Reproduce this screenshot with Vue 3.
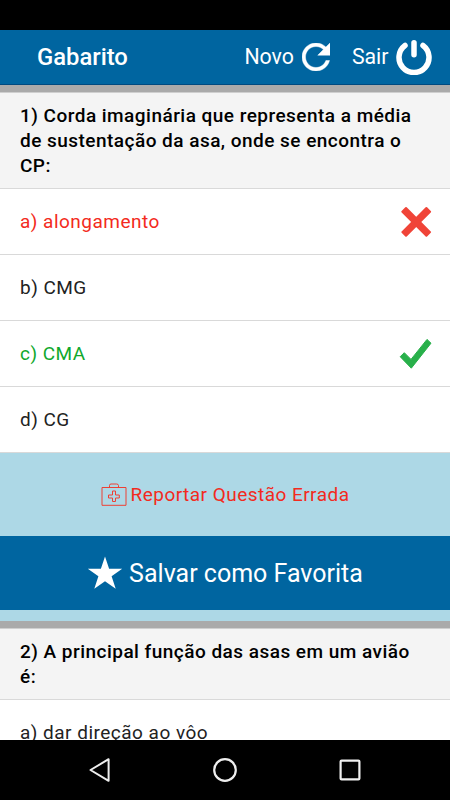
<script setup>
const questions = [
  {
    title: '1) Corda imaginária que representa a média de sustentação da asa, onde se encontra o CP:',
    options: [
      { text: 'a) alongamento', state: 'wrong' },
      { text: 'b) CMG', state: '' },
      { text: 'c) CMA', state: 'right' },
      { text: 'd) CG', state: '' },
    ],
    actions: true,
  },
  {
    title: '2) A principal função das asas em um avião é:',
    options: [{ text: 'a) dar direção ao vôo', state: '' }],
    actions: false,
  },
]
</script>

<template>
  <div class="screen">
    <div class="status"></div>
    <header class="bar">
      <h1>Gabarito</h1>
      <button class="tool novo">
        <span>Novo</span>
        <svg width="28" height="28" viewBox="4 4 16 16">
          <path d="M17.65 6.35C16.2 4.9 14.21 4 12 4c-4.42 0-7.99 3.58-7.99 8s3.57 8 7.99 8c3.73 0 6.84-2.55 7.73-6h-2.08c-.82 2.33-3.04 4-5.65 4-3.31 0-6-2.69-6-6s2.69-6 6-6c1.66 0 3.14.69 4.22 1.78L13 11h7V4l-2.35 2.35z" fill="#fff" stroke="#fff" stroke-width=".25" />
        </svg>
      </button>
      <button class="tool sair">
        <span>Sair</span>
        <svg width="36" height="36" viewBox="0 0 36 36">
          <path d="M9 6.5A15 15 0 1 0 27 6.5" fill="none" stroke="#fff" stroke-width="5.5" stroke-linecap="round" />
          <path d="M18 3.8V15.7" stroke="#fff" stroke-width="5.5" stroke-linecap="round" />
        </svg>
      </button>
    </header>
    <main>
      <section v-for="q in questions" :key="q.title" class="question">
        <h2>{{ q.title }}</h2>
        <div v-for="o in q.options" :key="o.text" class="option" :class="o.state">
          <span>{{ o.text }}</span>
          <svg v-if="o.state === 'wrong'" width="32" height="32" viewBox="0 0 32 32">
            <g fill="#f04438" transform="translate(15.2 15.9) rotate(45)">
              <rect x="-18" y="-3.6" width="36" height="7.2" rx="1" />
              <rect x="-3.6" y="-18" width="7.2" height="36" rx="1" />
            </g>
          </svg>
          <svg v-if="o.state === 'right'" width="34" height="32" viewBox="0 0 34 32">
            <path d="M1.2 18.7L5.3 14.7L12 21.4L28 1.4L32 5.2L12.3 30.2Z" fill="#28b04a" stroke="#28b04a" stroke-width="1" stroke-linejoin="round" />
          </svg>
        </div>
        <template v-if="q.actions">
          <div class="report">
            <svg width="26" height="24" viewBox="0 0 26 24">
              <g fill="none" stroke="#ee4034" stroke-width="1">
                <path d="M1 4.5H25V22.3H1ZM8.5 4.5V2.5Q8.5 1 10 1H15.5Q17.5 1 17.5 2.5V4.5" />
                <path d="M11.5 8H14.5V12H18.3V15H14.5V18.5H11.5V15H7.5V12H11.5Z" />
              </g>
            </svg>
            <span>Reportar Questão Errada</span>
          </div>
          <div class="favorite">
            <svg width="36" height="34" viewBox="0 0 36 34">
              <path d="M18 .6L22.1 12.7H35.2L24.6 20.3L28.7 32.8L18 25.2L7.3 32.8L11.4 20.3L.8 12.7H13.9Z" fill="#fff" />
            </svg>
            <span>Salvar como Favorita</span>
          </div>
        </template>
      </section>
    </main>
    <nav class="system">
      <svg width="24" height="26" viewBox="0 0 24 26">
        <path d="M20.6 2.2V23.8L2.5 13Z" fill="none" stroke="#eee" stroke-width="2" stroke-linejoin="round" />
      </svg>
      <svg width="26" height="26" viewBox="0 0 26 26">
        <circle cx="13" cy="13" r="10.8" fill="none" stroke="#eee" stroke-width="2.2" />
      </svg>
      <svg width="24" height="24" viewBox="0 0 24 24">
        <rect x="2.6" y="2.6" width="18.8" height="18.8" rx="1" fill="none" stroke="#eee" stroke-width="2.2" />
      </svg>
    </nav>
  </div>
</template>

<style>
body {
  margin: 0;
  background: #000;
}
</style>

<style scoped>
.screen {
  width: 450px;
  height: 800px;
  display: flex;
  flex-direction: column;
  overflow: hidden;
  background: #fff;
  font-family: Roboto, "Liberation Sans", sans-serif;
  color: #000;
}
svg {
  display: block;
  flex: none;
}
.status {
  flex: none;
  height: 30px;
  background: #000;
}
.bar {
  flex: none;
  box-sizing: border-box;
  height: 55px;
  display: flex;
  align-items: center;
  padding: 0 18px 0 37px;
  background: #0065a0;
  border-bottom: 1px solid #004a80;
  color: #fff;
}
h1 {
  margin: 0 auto 0 0;
  font-size: 23.8px;
  line-height: 28px;
  font-weight: 500;
}
.tool {
  display: flex;
  align-items: center;
  padding: 0;
  border: 0;
  background: none;
  color: #fff;
  font-family: inherit;
  font-size: 21.3px;
  line-height: 28px;
}
.novo {
  gap: 8px;
  margin-right: 22px;
}
.sair {
  gap: 7.5px;
}
main {
  flex: 1;
  min-height: 0;
  overflow: hidden;
}
.question {
  border-top: 7px solid #aaa;
}
h2 {
  margin: 0;
  padding: 10px 20px 10px;
  border-top: 1px solid #cfcfcf;
  border-bottom: 1px solid #d9d9d9;
  background: #f4f4f4;
  font-size: 19px;
  line-height: 25px;
  font-weight: 500;
  letter-spacing: 0.47px;
}
.option {
  box-sizing: border-box;
  height: 66px;
  padding: 0 17px 0 20px;
  display: flex;
  align-items: center;
  justify-content: space-between;
  border-bottom: 1px solid #d9d9d9;
  font-size: 19px;
  letter-spacing: 0.48px;
  color: #222;
}
.option.wrong {
  color: #f32a20;
}
.option.right {
  color: #10a82c;
}
.report {
  height: 83px;
  display: flex;
  align-items: center;
  justify-content: center;
  gap: 4px;
  background: #add8e6;
  color: #f32a20;
  font-size: 19px;
  letter-spacing: 0.47px;
}
.favorite {
  height: 74px;
  display: flex;
  align-items: center;
  justify-content: center;
  gap: 6px;
  background: #0065a0;
  border-bottom: 11px solid #add8e6;
  color: #fff;
  font-size: 25px;
}
.system {
  flex: none;
  height: 60px;
  display: grid;
  grid-template-columns: repeat(3, 125px);
  justify-content: center;
  align-items: center;
  justify-items: center;
  background: #000;
}
</style>
